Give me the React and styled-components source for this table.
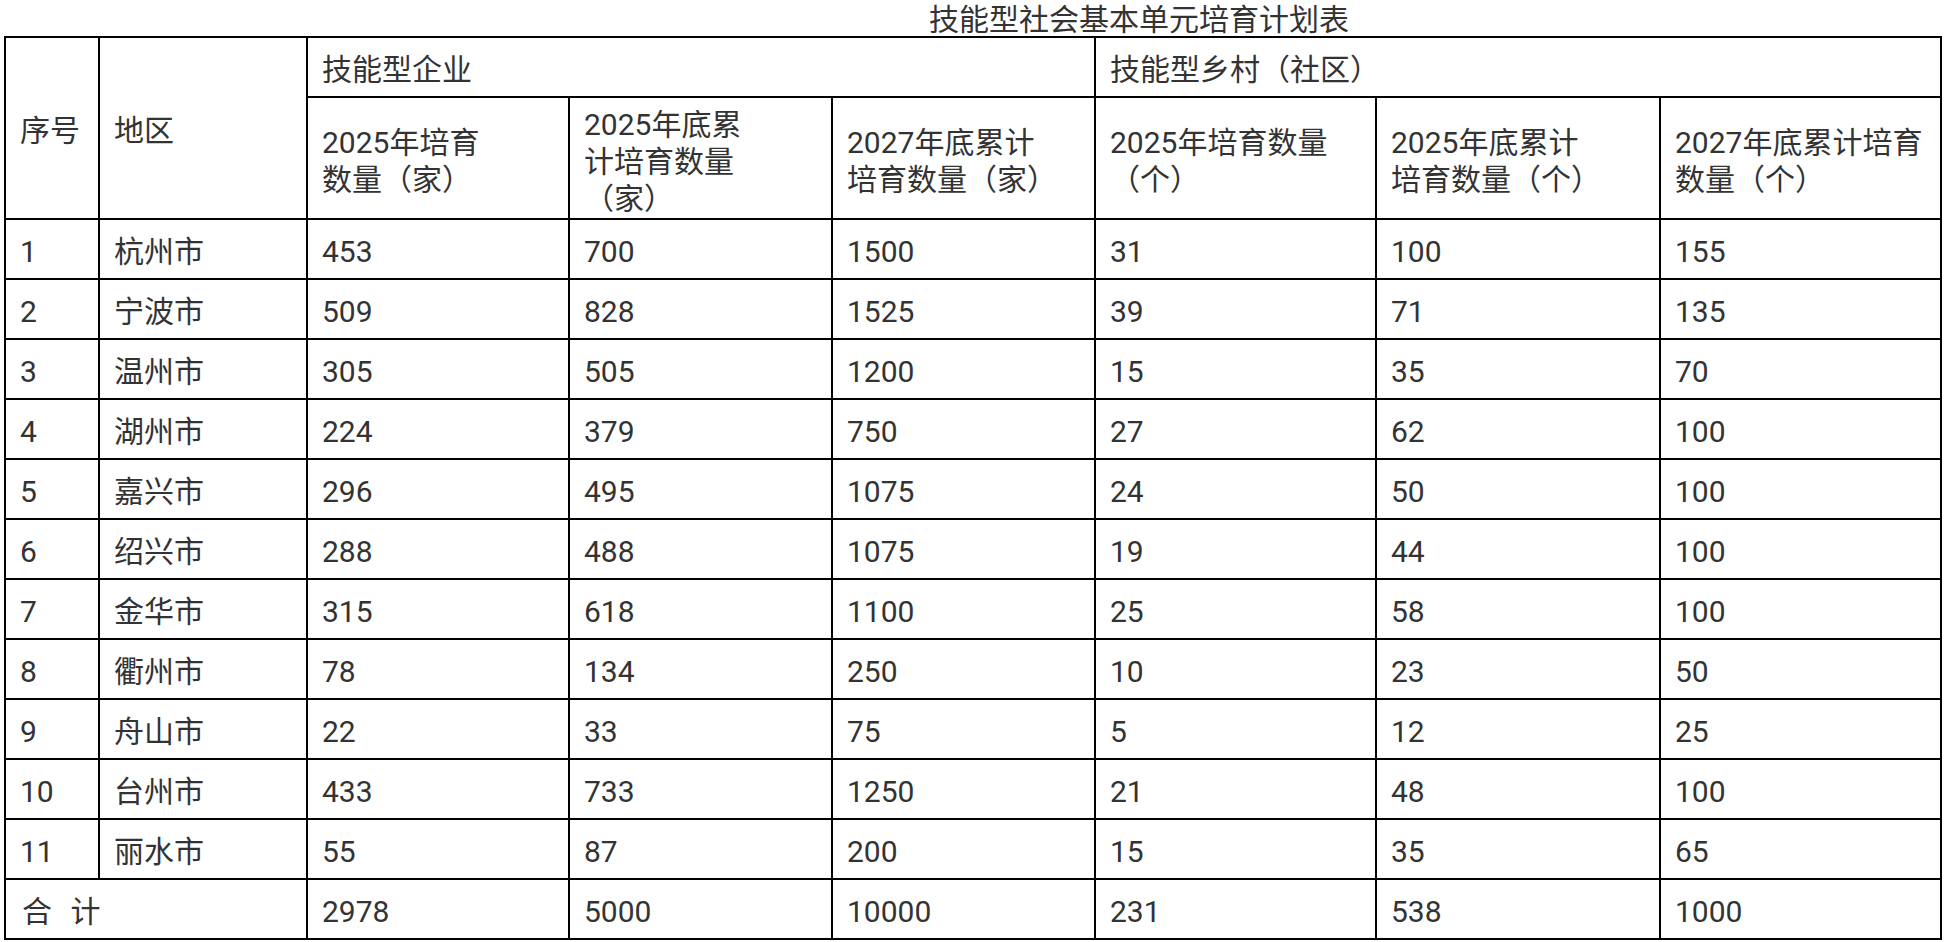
import React from 'react'
import styled, { createGlobalStyle } from 'styled-components'

const GlobalStyle = createGlobalStyle`
    html, body {
        margin: 0;
        padding: 0;
        background: #ffffff;
    }
    body {
        font-family: Roboto, "Noto Sans CJK SC", sans-serif;
        color: #333333;
    }
`

// 各市数据
const rows = [
    ['1', '杭州市', '453', '700', '1500', '31', '100', '155'],
    ['2', '宁波市', '509', '828', '1525', '39', '71', '135'],
    ['3', '温州市', '305', '505', '1200', '15', '35', '70'],
    ['4', '湖州市', '224', '379', '750', '27', '62', '100'],
    ['5', '嘉兴市', '296', '495', '1075', '24', '50', '100'],
    ['6', '绍兴市', '288', '488', '1075', '19', '44', '100'],
    ['7', '金华市', '315', '618', '1100', '25', '58', '100'],
    ['8', '衢州市', '78', '134', '250', '10', '23', '50'],
    ['9', '舟山市', '22', '33', '75', '5', '12', '25'],
    ['10', '台州市', '433', '733', '1250', '21', '48', '100'],
    ['11', '丽水市', '55', '87', '200', '15', '35', '65'],
]

const totals = ['2978', '5000', '10000', '231', '538', '1000']

const widths = [94, 208, 262, 263, 263, 281, 284, 281]

export default function App() {
    return (
        <Page>
            <GlobalStyle />
            <Title>技能型社会基本单元培育计划表</Title>
            <Table>
                <colgroup>
                    {widths.map((w, i) => <col key={i} style={{ width: w }} />)}
                </colgroup>
                <tbody>
                    <tr>
                        <Cell rowSpan={2}>序号</Cell>
                        <Cell rowSpan={2}>地区</Cell>
                        <Cell colSpan={3} $h={60}>技能型企业</Cell>
                        <Cell colSpan={3} $h={60}>技能型乡村（社区）</Cell>
                    </tr>
                    <tr>
                        <HeadCell>2025年培育<br />数量（家）</HeadCell>
                        <HeadCell>2025年底累<br />计培育数量<br />（家）</HeadCell>
                        <HeadCell>2027年底累计<br />培育数量（家）</HeadCell>
                        <HeadCell>2025年培育数量<br />（个）</HeadCell>
                        <HeadCell>2025年底累计<br />培育数量（个）</HeadCell>
                        <HeadCell>2027年底累计培育<br />数量（个）</HeadCell>
                    </tr>
                    {rows.map(r => (
                        <tr key={r[0]}>
                            {r.map((v, i) => <Cell key={i}>{v}</Cell>)}
                        </tr>
                    ))}
                    <tr>
                        <TotalCell colSpan={2}>合 计</TotalCell>
                        {totals.map((v, i) => <Cell key={i}>{v}</Cell>)}
                    </tr>
                </tbody>
            </Table>
        </Page>
    )
}

const Page = styled.div`
    width: 1947px;
    padding-left: 4px;
`
const Title = styled.div`
    box-sizing: border-box;
    height: 36px;
    padding: 3px 0 0 925px;
    font-size: 30px;
    line-height: 33px;
    white-space: nowrap;
`
const Table = styled.table`
    table-layout: fixed;
    border-collapse: collapse;
    width: 1938px;
`
const Cell = styled.td`
    height: ${p => p.$h || 60}px;
    padding: 6px 8px 0 14px;
    border: 2px solid #000000;
    font-size: 30px;
    line-height: 36px;
    text-align: left;
    vertical-align: middle;
    white-space: nowrap;
    box-sizing: border-box;
`
const HeadCell = styled(Cell)`
    height: 122px;
    line-height: 37px;
`
const TotalCell = styled(Cell)`
    padding-left: 16px;
    word-spacing: 11px;
`
